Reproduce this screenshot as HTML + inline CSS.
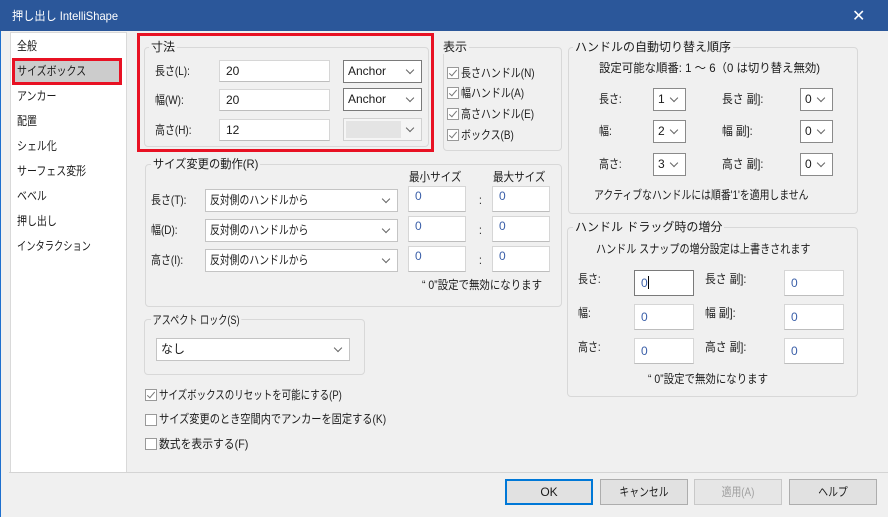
<!DOCTYPE html>
<html><head><meta charset="utf-8"><style>
*{box-sizing:border-box;margin:0;padding:0}
body{width:888px;height:517px;background:#f0f0f0;font-family:"Liberation Sans","Noto Sans CJK JP",sans-serif;font-size:12px;color:#1a1a1a;position:relative;overflow:hidden;border-left:1px solid #1d6fce}
.a{position:absolute;white-space:nowrap}
.t{position:absolute;white-space:nowrap;line-height:14px;transform:scaleX(.83);transform-origin:0 0}
.grp{position:absolute;border:1px solid #d8d8d8;border-radius:4px}
.gl{position:absolute;background:#f0f0f0;padding:0 2px;line-height:14px;white-space:nowrap;transform:scaleX(.83);transform-origin:0 0}
.in{position:absolute;background:#fff;border:1px solid #d6d6d6;border-bottom-color:#bdbdbd;padding:2px 6px;line-height:16px;color:#1a1a1a}
.cb{position:absolute;background:#fff;border:1px solid #adadad;line-height:20px;padding-left:4px;white-space:nowrap}
.s{display:inline-block;transform:scaleX(.82);transform-origin:0 0}
.cb:after{content:"";position:absolute;right:8px;top:6px;width:5px;height:5px;border-right:1px solid #666;border-bottom:1px solid #666;transform:rotate(45deg)}
.ck{position:absolute;width:12px;height:12px;border:1px solid #999;background:#fff}
.ck.on:after{content:"";position:absolute;left:3px;top:0px;width:3px;height:7px;border-right:1.5px solid #777;border-bottom:1.5px solid #777;transform:rotate(40deg)}
.btn{position:absolute;top:479px;height:26px;width:88px;border:1px solid #adadad;background:#e1e1e1;text-align:center;line-height:24px}
.btn span{display:inline-block;transform:scaleX(.82)}
.z{color:#3a5fa8}
</style></head><body>
<div class="a" style="left:-1px;top:0;width:889px;height:31px;background:#2b579a"></div>
<div class="t" style="left:11px;top:9px;color:#fff;font-size:12px;transform:scaleX(.93)">押し出し IntelliShape</div>
<div class="a" style="left:851px;top:6px;color:#fff;font-size:16px">✕</div>

<!-- left list -->
<div class="a" style="left:9px;top:32px;width:117px;height:441px;background:#fff;border:1px solid #d9d9d9"></div>
<div class="a" style="left:11px;top:58px;width:110px;height:27px;background:#cccccc;border:3px solid #e81123"></div>
<div class="t" style="left:16px;top:39px">全般</div>
<div class="t" style="left:16px;top:64px">サイズボックス</div>
<div class="t" style="left:16px;top:89px">アンカー</div>
<div class="t" style="left:16px;top:114px">配置</div>
<div class="t" style="left:16px;top:139px">シェル化</div>
<div class="t" style="left:16px;top:164px">サーフェス変形</div>
<div class="t" style="left:16px;top:189px">ベベル</div>
<div class="t" style="left:16px;top:214px">押し出し</div>
<div class="t" style="left:16px;top:239px;transform:scaleX(.77)">インタラクション</div>

<!-- 寸法 -->
<div class="grp" style="left:143px;top:47px;width:285px;height:100px"></div>
<div class="gl" style="left:148px;top:40px;transform:none">寸法</div>
<div class="t" style="left:154px;top:64px">長さ(L):</div>
<div class="t" style="left:154px;top:93px">幅(W):</div>
<div class="t" style="left:154px;top:123px">高さ(H):</div>
<div class="in" style="left:218px;top:60px;width:111px;height:22px">20</div>
<div class="in" style="left:218px;top:89px;width:111px;height:22px">20</div>
<div class="in" style="left:218px;top:119px;width:111px;height:22px">12</div>
<div class="cb" style="left:342px;top:60px;width:79px;height:23px;border-color:#7a7a7a">Anchor</div>
<div class="cb" style="left:342px;top:88px;width:79px;height:23px;border-color:#7a7a7a">Anchor</div>
<div class="cb" style="left:342px;top:118px;width:79px;height:23px;border-color:#d0d0d0;background:#f5f5f5"><div style="position:absolute;left:2px;top:2px;width:55px;height:17px;background:#e4e4e4"></div></div>
<div class="a" style="left:136px;top:33px;width:297px;height:119px;border:3px solid #e81123"></div>

<!-- 表示 -->
<div class="grp" style="left:442px;top:47px;width:119px;height:104px"></div>
<div class="gl" style="left:440px;top:40px;transform:none">表示</div>
<div class="ck on" style="left:446px;top:67px"></div><div class="t" style="left:460px;top:66px">長さハンドル(N)</div>
<div class="ck on" style="left:446px;top:87px"></div><div class="t" style="left:460px;top:86px">幅ハンドル(A)</div>
<div class="ck on" style="left:446px;top:108px"></div><div class="t" style="left:460px;top:107px">高さハンドル(E)</div>
<div class="ck on" style="left:446px;top:129px"></div><div class="t" style="left:460px;top:128px">ボックス(B)</div>

<!-- ハンドル自動 -->
<div class="grp" style="left:567px;top:47px;width:290px;height:167px"></div>
<div class="gl" style="left:572px;top:40px;transform:none">ハンドルの自動切り替え順序</div>
<div class="t" style="left:598px;top:61px;transform:scaleX(.95)">設定可能な順番: 1 〜 6（0 は切り替え無効)</div>
<div class="t" style="left:598px;top:92px">長さ:</div><div class="cb" style="left:652px;top:88px;width:33px;height:23px;border-color:#8a8a8a">1</div>
<div class="t" style="left:721px;top:92px;transform:scaleX(.9)">長さ 副]:</div><div class="cb" style="left:799px;top:88px;width:33px;height:23px;border-color:#8a8a8a">0</div>
<div class="t" style="left:598px;top:124px">幅:</div><div class="cb" style="left:652px;top:120px;width:33px;height:23px;border-color:#8a8a8a">2</div>
<div class="t" style="left:721px;top:124px;transform:scaleX(.9)">幅 副]:</div><div class="cb" style="left:799px;top:120px;width:33px;height:23px;border-color:#8a8a8a">0</div>
<div class="t" style="left:598px;top:157px">高さ:</div><div class="cb" style="left:652px;top:153px;width:33px;height:23px;border-color:#8a8a8a">3</div>
<div class="t" style="left:721px;top:157px;transform:scaleX(.9)">高さ 副]:</div><div class="cb" style="left:799px;top:153px;width:33px;height:23px;border-color:#8a8a8a">0</div>
<div class="t" style="left:593px;top:188px;transform:scaleX(.82)">アクティブなハンドルには順番'1'を適用しません</div>

<!-- サイズ変更の動作 -->
<div class="grp" style="left:144px;top:164px;width:417px;height:143px"></div>
<div class="gl" style="left:150px;top:157px;transform:scaleX(.94)">サイズ変更の動作(R)</div>
<div class="t" style="left:408px;top:170px;transform:scaleX(.88)">最小サイズ</div>
<div class="t" style="left:492px;top:170px;transform:scaleX(.88)">最大サイズ</div>
<div class="t" style="left:150px;top:193px">長さ(T):</div>
<div class="t" style="left:150px;top:223px">幅(D):</div>
<div class="t" style="left:150px;top:253px">高さ(I):</div>
<div class="cb" style="left:204px;top:189px;width:193px;height:23px;border-color:#c4c4c4"><span class="s">反対側のハンドルから</span></div>
<div class="cb" style="left:204px;top:219px;width:193px;height:23px;border-color:#c4c4c4"><span class="s">反対側のハンドルから</span></div>
<div class="cb" style="left:204px;top:249px;width:193px;height:23px;border-color:#c4c4c4"><span class="s">反対側のハンドルから</span></div>
<div class="in z" style="left:407px;top:186px;width:58px;height:26px;padding-top:1px">0</div>
<div class="in z" style="left:407px;top:216px;width:58px;height:26px;padding-top:1px">0</div>
<div class="in z" style="left:407px;top:246px;width:58px;height:26px;padding-top:1px">0</div>
<div class="t" style="left:478px;top:193px">:</div><div class="t" style="left:478px;top:223px">:</div><div class="t" style="left:478px;top:253px">:</div>
<div class="in z" style="left:491px;top:186px;width:58px;height:26px;padding-top:1px">0</div>
<div class="in z" style="left:491px;top:216px;width:58px;height:26px;padding-top:1px">0</div>
<div class="in z" style="left:491px;top:246px;width:58px;height:26px;padding-top:1px">0</div>
<div class="t" style="left:421px;top:278px;transform:scaleX(.87)">“ 0”設定で無効になります</div>

<!-- アスペクト -->
<div class="grp" style="left:143px;top:319px;width:221px;height:56px"></div>
<div class="gl" style="left:150px;top:313px;transform:scaleX(.76)">アスペクト ロック(S)</div>
<div class="cb" style="left:155px;top:338px;width:194px;height:23px;border-color:#c4c4c4">なし</div>

<div class="ck on" style="left:144px;top:389px"></div><div class="t" style="left:158px;top:388px;transform:scaleX(.79)">サイズボックスのリセットを可能にする(P)</div>
<div class="ck" style="left:144px;top:414px"></div><div class="t" style="left:158px;top:412px;transform:scaleX(.85)">サイズ変更のとき空間内でアンカーを固定する(K)</div>
<div class="ck" style="left:144px;top:438px"></div><div class="t" style="left:158px;top:437px;transform:scaleX(.9)">数式を表示する(F)</div>

<!-- ハンドル ドラッグ -->
<div class="grp" style="left:566px;top:227px;width:291px;height:170px"></div>
<div class="gl" style="left:572px;top:220px;transform:none">ハンドル ドラッグ時の増分</div>
<div class="t" style="left:595px;top:242px;transform:scaleX(.84)">ハンドル スナップの増分設定は上書きされます</div>
<div class="t" style="left:577px;top:272px">長さ:</div><div class="in z" style="left:633px;top:270px;width:60px;height:26px;border-color:#7a7a7a;padding-top:4px">0<span style="display:inline-block;width:1px;height:13px;background:#000;vertical-align:-2px"></span></div>
<div class="t" style="left:704px;top:272px;transform:scaleX(.9)">長さ 副]:</div><div class="in z" style="left:783px;top:270px;width:60px;height:26px;padding-top:4px">0</div>
<div class="t" style="left:577px;top:306px">幅:</div><div class="in z" style="left:633px;top:304px;width:60px;height:26px;padding-top:4px">0</div>
<div class="t" style="left:704px;top:306px;transform:scaleX(.9)">幅 副]:</div><div class="in z" style="left:783px;top:304px;width:60px;height:26px;padding-top:4px">0</div>
<div class="t" style="left:577px;top:340px">高さ:</div><div class="in z" style="left:633px;top:338px;width:60px;height:26px;padding-top:4px">0</div>
<div class="t" style="left:704px;top:340px;transform:scaleX(.9)">高さ 副]:</div><div class="in z" style="left:783px;top:338px;width:60px;height:26px;padding-top:4px">0</div>
<div class="t" style="left:647px;top:372px;transform:scaleX(.87)">“ 0”設定で無効になります</div>

<div class="a" style="left:8px;top:472px;width:880px;height:1px;background:#d4d4d4"></div>
<div class="btn" style="left:504px;border:2px solid #0078d7;line-height:22px">OK</div>
<div class="btn" style="left:599px"><span>キャンセル</span></div>
<div class="btn" style="left:693px;color:#a0a0a0;border-color:#c8c8c8;background:#e6e6e6"><span>適用(A)</span></div>
<div class="btn" style="left:788px"><span>ヘルプ</span></div>
</body></html>
